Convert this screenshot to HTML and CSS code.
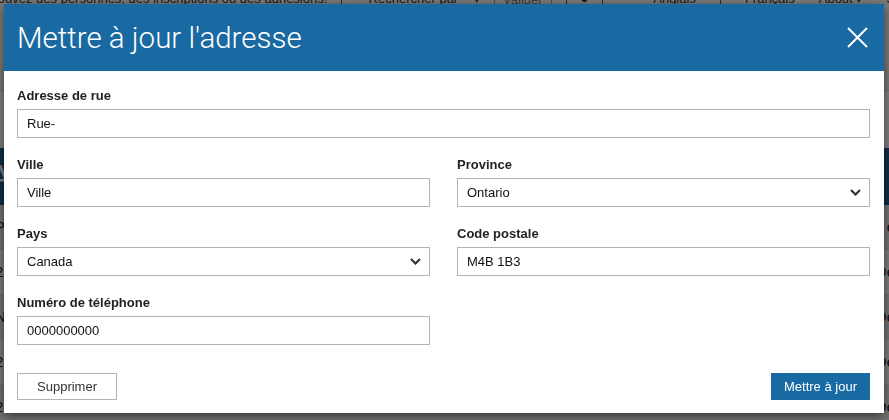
FILE: index.html
```html
<!DOCTYPE html>
<html lang="fr">
<head>
    <meta charset="UTF-8">
    <meta name="viewport" content="width=device-width, initial-scale=1.0">
    <title>Mettre à jour l'adresse</title>
    <link rel="stylesheet" href="styles.css">
</head>
<body>
    <!-- page behind the dialog -->
    <div class="page">
        <div class="topbar">
            <div class="search">
                <span class="tagline">Trouvez des personnes, des inscriptions ou des adhésions!</span>
                <span class="sep"></span>
                <span class="search-by">-- Rechercher par -- <span class="caret">▾</span></span>
                <span class="btn-small">Valider</span>
                <span class="sep"></span>
                <span class="user">&#9679;</span>
                <span class="sep"></span>
            </div>
            <div class="langs">
                <span>Anglais</span>
                <span class="sep"></span>
                <span>Français</span>
                <span>About <span class="caret">▾</span></span>
                <span>S</span>
            </div>
        </div>
        <div class="banner">A</div>
        <div class="rows">
            <div class="row"><span>P</span><span>e</span></div>
            <div class="row"><span>2</span><span>De</span></div>
            <div class="row"><span>N</span><span>De</span></div>
            <div class="row"><span>2</span><span>De</span></div>
            <div class="row"><span>2</span><span>De</span></div>
        </div>
    </div>

    <div class="backdrop">
        <div class="modal">
            <div class="modal-header">
                <h2>Mettre à jour l'adresse</h2>
                <button class="close" aria-label="Fermer">
                    <svg width="21" height="21" viewBox="0 0 21 21">
                        <path d="M1 1 L20 20 M20 1 L1 20" stroke="#fff" stroke-width="2" fill="none"/>
                    </svg>
                </button>
            </div>

            <form class="modal-body">
                <div class="field wide">
                    <label>Adresse de rue</label>
                    <input type="text" value="Rue-">
                </div>
                <div class="field">
                    <label>Ville</label>
                    <input type="text" value="Ville">
                </div>
                <div class="field">
                    <label>Province</label>
                    <div class="select">
                        <select><option>Ontario</option></select>
                        <svg width="11" height="7" viewBox="0 0 11 7"><path d="M1 1 L5.5 5.5 L10 1" stroke="#333" stroke-width="2.2" fill="none"/></svg>
                    </div>
                </div>
                <div class="field">
                    <label>Pays</label>
                    <div class="select">
                        <select><option>Canada</option></select>
                        <svg width="11" height="7" viewBox="0 0 11 7"><path d="M1 1 L5.5 5.5 L10 1" stroke="#333" stroke-width="2.2" fill="none"/></svg>
                    </div>
                </div>
                <div class="field">
                    <label>Code postale</label>
                    <input type="text" value="M4B 1B3">
                </div>
                <div class="field">
                    <label>Numéro de téléphone</label>
                    <input type="text" value="0000000000">
                </div>
            </form>

            <div class="modal-footer">
                <button class="btn btn-default">Supprimer</button>
                <button class="btn btn-primary">Mettre à jour</button>
            </div>
        </div>
    </div>
</body>
</html>
```

FILE: styles.css
```css
body {
    margin: 0;
    font-family: "Liberation Sans", Arial, sans-serif;
    font-size: 13px;
    color: #222;
    background: #fff;
    overflow: hidden;
}

/* background page */
.page {
    margin-top: -8px;
    overflow: hidden;
}
.topbar {
    display: flex;
    justify-content: space-between;
    height: 98px;
    line-height: 14px;
    background: #f4f4f4;
    border-bottom: 1px solid #d8d8d8;
    color: #333;
    font-size: 13px;
    white-space: nowrap;
}
.search, .langs {
    display: flex;
    gap: 14px;
    align-items: flex-start;
}
.search {
    margin-left: -14px;
}
.langs {
    gap: 24px;
    margin-right: -6px;
}
.sep {
    width: 1px;
    height: 14px;
    background: #555;
}
.btn-small {
    border: 1px solid #999;
    padding: 0 8px;
    color: #777;
}
.caret {
    font-size: 11px;
}
.banner {
    margin-top: 57px;
    height: 57px;
    background: #1d5a8c;
    color: #fff;
    font-size: 34px;
    line-height: 57px;
    text-indent: -12px;
}
.row {
    display: flex;
    justify-content: space-between;
    height: 44px;
    line-height: 44px;
    border-bottom: 1px solid #ddd;
    background: #fafafa;
    padding: 0 0 0 0;
    font-size: 15px;
}
.row span:first-child {
    margin-left: -5px;
}
.row span:last-child {
    margin-right: -6px;
}
.row:nth-child(odd) {
    background: #e6e6e6;
}

/* dialog */
.backdrop {
    position: fixed;
    inset: 0;
    background: rgba(0, 0, 0, 0.5);
    padding: 4px 0 0 4px;
}
.modal {
    width: 880px;
    background: #fff;
    box-shadow: 0 3px 10px rgba(0, 0, 0, 0.55);
}
.modal-header {
    display: flex;
    align-items: center;
    justify-content: space-between;
    height: 67px;
    padding: 0 16px 0 13px;
    background: #1969a2;
    color: #fff;
}
.modal-header h2 {
    margin: 0;
    font-family: Roboto, "Liberation Sans", sans-serif;
    font-weight: 300;
    font-size: 29.5px;
}
.close {
    display: flex;
    padding: 0;
    border: none;
    background: none;
    cursor: pointer;
}
.modal-body {
    display: grid;
    grid-template-columns: 1fr 1fr;
    column-gap: 27px;
    row-gap: 18px;
    padding: 16px 14px 0 13px;
}
.field.wide {
    grid-column: 1 / 3;
}
.field label {
    display: block;
    font-weight: bold;
    line-height: 18px;
    margin-bottom: 4px;
}
.field input,
.select {
    box-sizing: border-box;
    width: 100%;
    height: 29px;
    border: 1px solid #b4b4b4;
    background: #fff;
    font-family: inherit;
    font-size: 13px;
    color: #111;
}
.field input {
    padding: 0 9px;
}
.select {
    display: flex;
    align-items: center;
    padding-right: 8px;
}
.select select {
    flex: 1;
    height: 100%;
    appearance: none;
    border: none;
    background: none;
    padding: 0 9px;
    font-family: inherit;
    font-size: 13px;
    color: #111;
}
.modal-footer {
    display: flex;
    justify-content: space-between;
    margin-top: 28px;
    padding: 0 14px 13px 13px;
}
.btn {
    height: 27px;
    font-family: inherit;
    font-size: 13px;
    cursor: pointer;
}
.btn-default {
    width: 100px;
    background: #fff;
    border: 1px solid #b4b4b4;
    color: #333;
}
.btn-primary {
    width: 99px;
    background: #1969a2;
    border: none;
    color: #fff;
}
```
